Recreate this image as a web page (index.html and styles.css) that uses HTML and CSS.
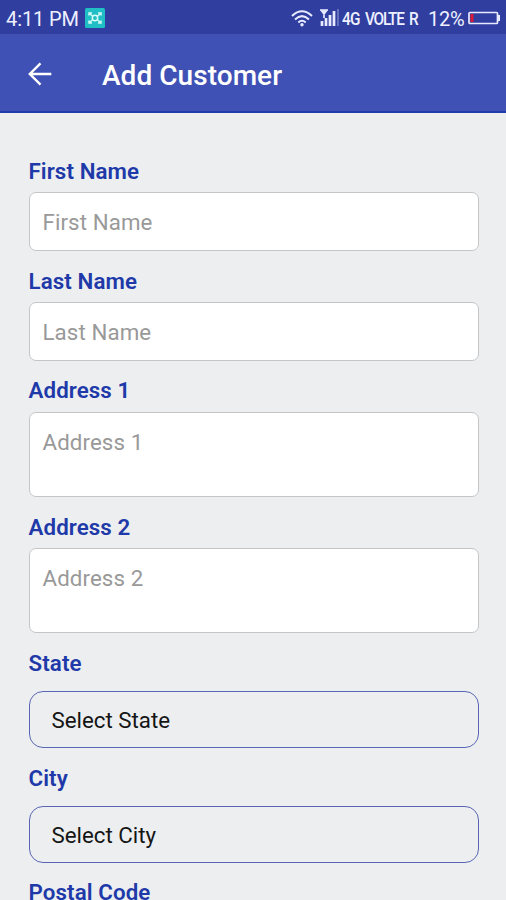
FILE: index.html
```html
<!DOCTYPE html>
<html lang="en">
<head>
<meta charset="utf-8">
<title>Add Customer</title>
<link rel="stylesheet" href="styles.css">
</head>
<body>
<div class="status">
  <span class="time">4:11 PM</span>
  <svg class="app-icon" width="20" height="20" viewBox="0 0 20 20" fill="none" stroke="#d4fbfa" stroke-width="1.5"><rect width="20" height="20" rx="1.5" fill="#20bfc5" stroke="none"/><path d="M4 7.500V5h3M13 5h3v2.500M16 12.500V15h-3M7 15H4v-2.500M5 6l3 2.500M15 6l-3 2.500M5 14l3-2.500M15 14l-3-2.500"/><circle cx="10" cy="10" r="2.700"/></svg>
  <svg class="wifi" width="22" height="17" viewBox="0 0 22 17" fill="none" stroke="#e8eaff" stroke-width="2"><path d="M1 6Q11-3.500 21 6M4 9.400Q11 2.800 18 9.400M7.300 12.500Q11 9 14.700 12.500"/><circle cx="11" cy="14.800" r="1.700" fill="#e8eaff" stroke="none"/></svg>
  <svg class="signal" width="20" height="18" viewBox="0 0 20 18" fill="none" stroke="#e8eaff" stroke-width="1.700"><path d="M0 1h8M1 1l3 4 3-4M4 1v8"/><path d="M2 17v-5M6 17V9M10 17V6M14 17V2" stroke-width="2.700"/><path d="M18 17V0" stroke="#6570bd" stroke-width="2"/></svg>
  <span class="net">4G</span>
  <span class="volte">VOLTE</span>
  <span class="roam">R</span>
  <span class="percent">12%</span>
  <svg class="battery" width="33" height="14" viewBox="0 0 33 14" fill="none"><rect x="1" y="1.500" width="28.500" height="11" rx="1" stroke="#e8eaff" stroke-width="1.700"/><path d="M30 4h2v6h-2z" fill="#e8eaff"/><path d="M2.500 3h3v8h-3z" fill="#dc1935"/></svg>
</div>
<header class="appbar">
  <svg class="back" width="24" height="24" viewBox="0 0 24 24" fill="none" stroke="#fff" stroke-width="2.400"><path d="M23.300 12H2M12.500 1.300L1.800 12l10.700 10.700"/></svg>
  <h1 class="title">Add Customer</h1>
</header>
<main class="form">
  <label class="label" for="first">First Name</label>
  <input class="field" id="first" placeholder="First Name">
  <label class="label" for="last">Last Name</label>
  <input class="field" id="last" placeholder="Last Name">
  <label class="label label-raised" for="a1">Address 1</label>
  <textarea class="field area" id="a1" placeholder="Address 1"></textarea>
  <label class="label" for="a2">Address 2</label>
  <textarea class="field area" id="a2" placeholder="Address 2"></textarea>
  <span class="label">State</span>
  <button class="select">Select State</button>
  <span class="label">City</span>
  <button class="select">Select City</button>
  <span class="label label-raised">Postal Code</span>
</main>
</body>
</html>
```
FILE: styles.css
```css
* { box-sizing: border-box; }
body {
  margin: 0;
  height: 900px;
  overflow: hidden;
  background: #eceef0;
  font-family: Roboto, sans-serif;
}
.status {
  display: flex;
  align-items: center;
  height: 34px;
  padding: 3px 5px 0 6px;
  background: #303f9f;
  color: #eef0ff;
  font-size: 20px;
  line-height: 30px;
  white-space: nowrap;
}
.status svg { flex: none; }
.time { width: 79px; letter-spacing: -.1px; }
.app-icon { margin-top: -2px; }
.wifi { margin-left: 186px; margin-top: -1px; }
.signal { margin-left: 7px; margin-top: -1px; }
.net,
.volte,
.roam {
  flex: none;
  font-size: 18.500px;
  font-weight: 500;
  letter-spacing: -.8px;
  transform: scaleX(.83);
  transform-origin: left center;
}
.net { width: 23px; margin-left: 2px; }
.volte { width: 44px; letter-spacing: -1.500px; }
.roam { width: 18px; }
.percent { flex: none; width: 40px; margin-left: 1px; letter-spacing: -.3px; }
.battery { margin-top: -1px; }
.appbar {
  display: flex;
  align-items: center;
  height: 79px;
  padding: 0 28px;
  background: #3f51b5;
  border-bottom: 2px solid #1f3caa;
  color: #fff;
}
.back { margin-top: 2px; }
.title {
  margin: 7px 0 0 50px;
  font-size: 28px;
  line-height: 36px;
  font-weight: 500;
  letter-spacing: .05px;
}
.form {
  display: flex;
  flex-direction: column;
  padding: 45px 27.500px 0 28.500px;
}
.label {
  flex: none;
  height: 34px;
  color: #2039a9;
  font-size: 22.300px;
  font-weight: 600;
  line-height: 27px;
  letter-spacing: .1px;
}
.label-raised { line-height: 25px; }
.field {
  flex: none;
  width: 100%;
  height: 59px;
  margin: 0 0 17px;
  padding: 0 13px;
  border: 1.500px solid #c5c6c8;
  border-radius: 7px;
  outline: none;
  background: #fff;
  font: 22.300px Roboto, sans-serif;
  letter-spacing: .1px;
  resize: none;
}
.field::placeholder { color: #999; opacity: 1; }
.area { height: 85px; padding-top: 16px; }
.select {
  flex: none;
  height: 57px;
  margin: 7px 0 17px;
  padding: 0 22px;
  border: 1.500px solid #5965b4;
  border-radius: 14px;
  background: transparent;
  color: #151515;
  font: 22.300px Roboto, sans-serif;
  text-align: left;
}
```
